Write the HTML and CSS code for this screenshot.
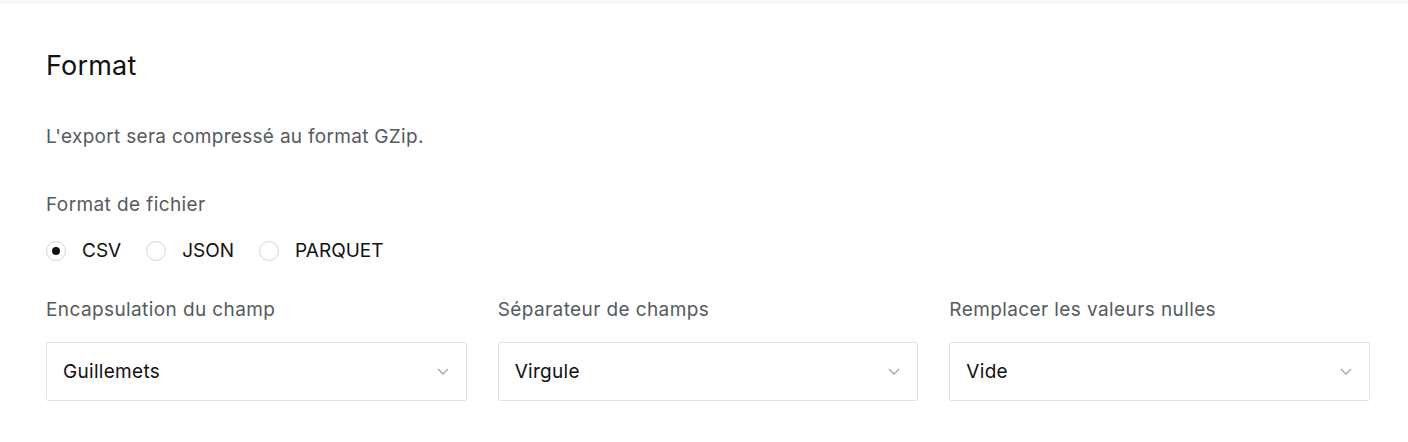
FILE: index.html
```html
<!DOCTYPE html>
<html lang="fr">
<head>
<meta charset="utf-8">
<link rel="stylesheet" href="styles.css">
</head>
<body>
<div class="topbar"></div>
<section class="panel">
  <h2 class="title">Format</h2>
  <p class="desc">L'export sera compressé au format GZip.</p>
  <div class="field-label">Format de fichier</div>
  <div class="radios">
    <label class="radio"><span class="dot checked"></span><span class="rtext">CSV</span></label>
    <label class="radio"><span class="dot"></span><span class="rtext">JSON</span></label>
    <label class="radio"><span class="dot"></span><span class="rtext">PARQUET</span></label>
  </div>
  <div class="grid">
    <div class="col">
      <div class="field-label">Encapsulation du champ</div>
      <div class="select"><span>Guillemets</span><svg class="chev" width="12" height="7" viewBox="0 0 12 7"><path d="M1 1l5 5 5-5" fill="none" stroke="#a8a8a8" stroke-width="1.4"/></svg></div>
    </div>
    <div class="col">
      <div class="field-label">Séparateur de champs</div>
      <div class="select"><span>Virgule</span><svg class="chev" width="12" height="7" viewBox="0 0 12 7"><path d="M1 1l5 5 5-5" fill="none" stroke="#a8a8a8" stroke-width="1.4"/></svg></div>
    </div>
    <div class="col">
      <div class="field-label">Remplacer les valeurs nulles</div>
      <div class="select"><span>Vide</span><svg class="chev" width="12" height="7" viewBox="0 0 12 7"><path d="M1 1l5 5 5-5" fill="none" stroke="#a8a8a8" stroke-width="1.4"/></svg></div>
    </div>
  </div>
</section>
</body>
</html>
```
FILE: styles.css
```css
html, body {
  margin: 0;
  padding: 0;
  background: #fff;
}
body {
  font-family: Inter, "Liberation Sans", sans-serif;
  color: #111;
  letter-spacing: 0.3px;
}
.topbar {
  height: 4px;
  background: #f6f7f7;
}
.panel {
  padding: 45px 38px 0 46px;
}
.title {
  margin: 0;
  font-size: 27px;
  font-weight: 400;
  line-height: 34px;
  color: #111;
  letter-spacing: 0.2px;
}
.desc {
  margin: 41px 0 0;
  font-size: 19px;
  line-height: 26px;
  color: #555a5e;
}
.field-label {
  font-size: 19px;
  line-height: 26px;
  color: #555a5e;
  letter-spacing: 0.4px;
}
.desc + .field-label {
  margin-top: 42px;
}
.radios {
  display: flex;
  align-items: center;
  gap: 25px;
  margin-top: 20px;
}
.radio {
  display: flex;
  align-items: center;
  gap: 16px;
}
.dot {
  width: 20px;
  height: 20px;
  border: 1px solid #d4d4d4;
  border-radius: 50%;
  box-sizing: border-box;
  display: flex;
  align-items: center;
  justify-content: center;
}
.dot.checked::after {
  content: "";
  width: 8px;
  height: 8px;
  border-radius: 50%;
  background: #111;
}
.rtext {
  font-size: 19px;
  line-height: 26px;
  color: #111;
  letter-spacing: 0;
}
.grid {
  display: grid;
  grid-template-columns: repeat(3, 1fr);
  column-gap: 31px;
  margin-top: 33px;
}
.select {
  margin-top: 19px;
  height: 59px;
  box-sizing: border-box;
  border: 1px solid #e3e3e3;
  border-radius: 2px;
  display: flex;
  align-items: center;
  justify-content: space-between;
  padding: 0 17px 0 16px;
  font-size: 19px;
  color: #111;
}
.chev {
  display: block;
}
```
